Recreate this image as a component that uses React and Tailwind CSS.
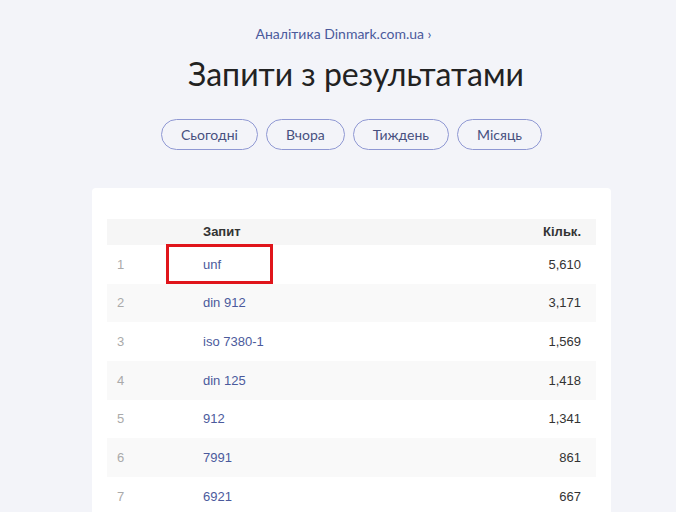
import React from "react";

const periods = ["Сьогодні", "Вчора", "Тиждень", "Місяць"];

const rows = [
  { q: "unf", n: "5,610" },
  { q: "din 912", n: "3,171" },
  { q: "iso 7380-1", n: "1,569" },
  { q: "din 125", n: "1,418" },
  { q: "912", n: "1,341" },
  { q: "7991", n: "861" },
  { q: "6921", n: "667" },
];

export default function App() {
  return (
    <div className="h-[512px] overflow-hidden bg-[#f3f4f9] font-['Lato',sans-serif]">
      <div className="ml-[92px] w-[519px] pt-[21px]">
        <div className="pr-[16px] text-center">
          <a className="text-[14px] text-[#4b5a9c]">Аналітика Dinmark.com.ua ›</a>
        </div>
        <h1 className="mt-[9px] pl-[9px] text-center text-[32px] leading-[40px] text-[#222]">
          Запити з результатами
        </h1>
        <div className="mt-[25px] flex justify-center gap-[8px]">
          {periods.map((p) => (
            <button
              key={p}
              className="h-[31px] rounded-full border-[1.5px] border-[#8f98d3] px-[19px] text-[14px] text-[#47507f]"
            >
              {p}
            </button>
          ))}
        </div>

        <div className="mt-[38px] rounded-[4px] bg-white px-[15px] pt-[31px] font-['Liberation_Sans',Arial,sans-serif] text-[13px]">
          <div className="grid h-[26px] grid-cols-[59px_1fr_auto] items-center bg-[#f6f6f6] pr-[15px] font-bold text-[#333]">
            <span />
            <span className="pl-[37px]">Запит</span>
            <span className="text-right">Кільк.</span>
          </div>
          {rows.map((r, i) => (
            <div
              key={r.q}
              className={`grid h-[38.7px] grid-cols-[59px_1fr_auto] items-center pr-[15px] ${
                i % 2 === 1 ? "bg-[#f9f9f9]" : "bg-white"
              }`}
            >
              <span className="pl-[10px] text-[#aaa]">{i + 1}</span>
              <span className="relative flex h-full items-center pl-[37px] text-[#4b5a9c]">
                {i === 0 && (
                  <span className="absolute left-0 top-[-1px] h-[40px] w-[107px] border-[3px] border-[#e0151b]" />
                )}
                {r.q}
              </span>
              <span className="text-right text-[#333]">{r.n}</span>
            </div>
          ))}
        </div>
      </div>
    </div>
  );
}
